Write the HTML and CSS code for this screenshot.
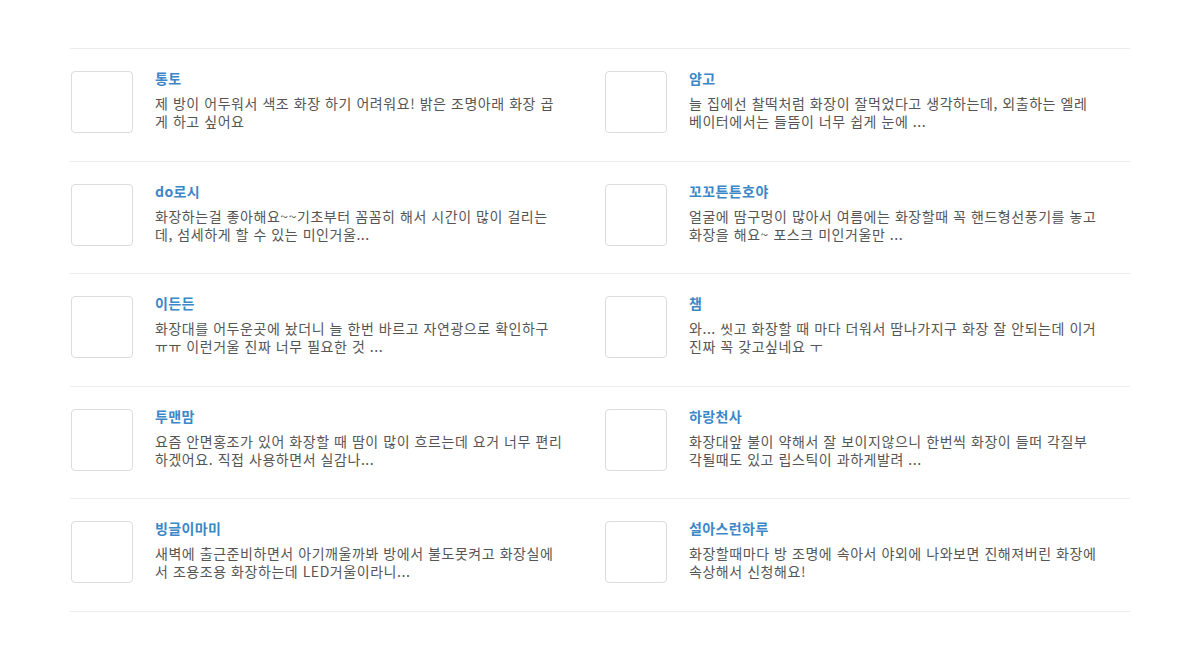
FILE: index.html
```html
<!DOCTYPE html>
<html lang="ko">
<head>
<meta charset="utf-8">
<link rel="stylesheet" href="styles.css">
</head>
<body>
<div class="page">
  <ul class="reviews">
    <li class="item"><div class="thumb"></div><div class="body"><div class="name">통토</div><p class="text">제 방이 어두워서 색조 화장 하기 어려워요! 밝은 조명아래 화장 곱게 하고 싶어요</p></div></li>
    <li class="item"><div class="thumb"></div><div class="body"><div class="name">얌고</div><p class="text">늘 집에선 찰떡처럼 화장이 잘먹었다고 생각하는데, 외출하는 엘레베이터에서는 들뜸이 너무 쉽게 눈에 ...</p></div></li>
    <li class="item"><div class="thumb"></div><div class="body"><div class="name">do로시</div><p class="text">화장하는걸 좋아해요~~기초부터 꼼꼼히 해서 시간이 많이 걸리는데, 섬세하게 할 수 있는 미인거울...</p></div></li>
    <li class="item"><div class="thumb"></div><div class="body"><div class="name">꼬꼬튼튼호야</div><p class="text">얼굴에 땀구멍이 많아서 여름에는 화장할때 꼭 핸드형선풍기를 놓고 화장을 해요~ 포스크 미인거울만 ...</p></div></li>
    <li class="item"><div class="thumb"></div><div class="body"><div class="name">이든든</div><p class="text">화장대를 어두운곳에 놨더니 늘 한번 바르고 자연광으로 확인하구 ㅠㅠ 이런거울 진짜 너무 필요한 것 ...</p></div></li>
    <li class="item"><div class="thumb"></div><div class="body"><div class="name">챔</div><p class="text">와... 씻고 화장할 때 마다 더워서 땀나가지구 화장 잘 안되는데 이거 진짜 꼭 갖고싶네요 ㅜ</p></div></li>
    <li class="item"><div class="thumb"></div><div class="body"><div class="name">투맨맘</div><p class="text">요즘 안면홍조가 있어 화장할 때 땀이 많이 흐르는데 요거 너무 편리하겠어요. 직접 사용하면서 실감나...</p></div></li>
    <li class="item"><div class="thumb"></div><div class="body"><div class="name">하랑천사</div><p class="text">화장대앞 불이 약해서 잘 보이지않으니 한번씩 화장이 들떠 각질부각될때도 있고 립스틱이 과하게발려 ...</p></div></li>
    <li class="item"><div class="thumb"></div><div class="body"><div class="name">빙글이마미</div><p class="text">새벽에 출근준비하면서 아기깨울까봐 방에서 불도못켜고 화장실에서 조용조용 화장하는데 LED거울이라니...</p></div></li>
    <li class="item"><div class="thumb"></div><div class="body"><div class="name">설아스런하루</div><p class="text">화장할때마다 방 조명에 속아서 야외에 나와보면 진해져버린 화장에 속상해서 신청해요!</p></div></li>
  </ul>
</div>
</body>
</html>
```
FILE: styles.css
```css
html, body {
  margin: 0;
  padding: 0;
  background: #fff;
}
body {
  font-family: "Noto Sans CJK KR", "Noto Sans", sans-serif;
  color: #555;
}
.page {
  padding: 48px 70px 0;
}
.reviews {
  list-style: none;
  margin: 0;
  padding: 0;
  display: grid;
  grid-template-columns: 534px 1fr;
  border-top: 1px solid #ececec;
}
.item {
  display: flex;
  align-items: flex-start;
  gap: 22px;
  height: 112.6px;
  padding: 22px 0 0 1px;
  box-sizing: border-box;
  border-bottom: 1px solid #ececec;
}
.thumb {
  flex: none;
  width: 60px;
  height: 60px;
  border: 1px solid #dcdcdc;
  border-radius: 4px;
  background: #fff;
}
.body {
  width: 409px;
  padding-top: 1px;
}
.name {
  font-size: 14px;
  font-weight: 700;
  letter-spacing: 0.4px;
  color: #3b87c8;
  line-height: 18px;
  margin-top: -3px;
}
.text {
  margin: 7px 0 0;
  font-size: 14px;
  letter-spacing: 0.55px;
  line-height: 18px;
  color: #555;
}
```
